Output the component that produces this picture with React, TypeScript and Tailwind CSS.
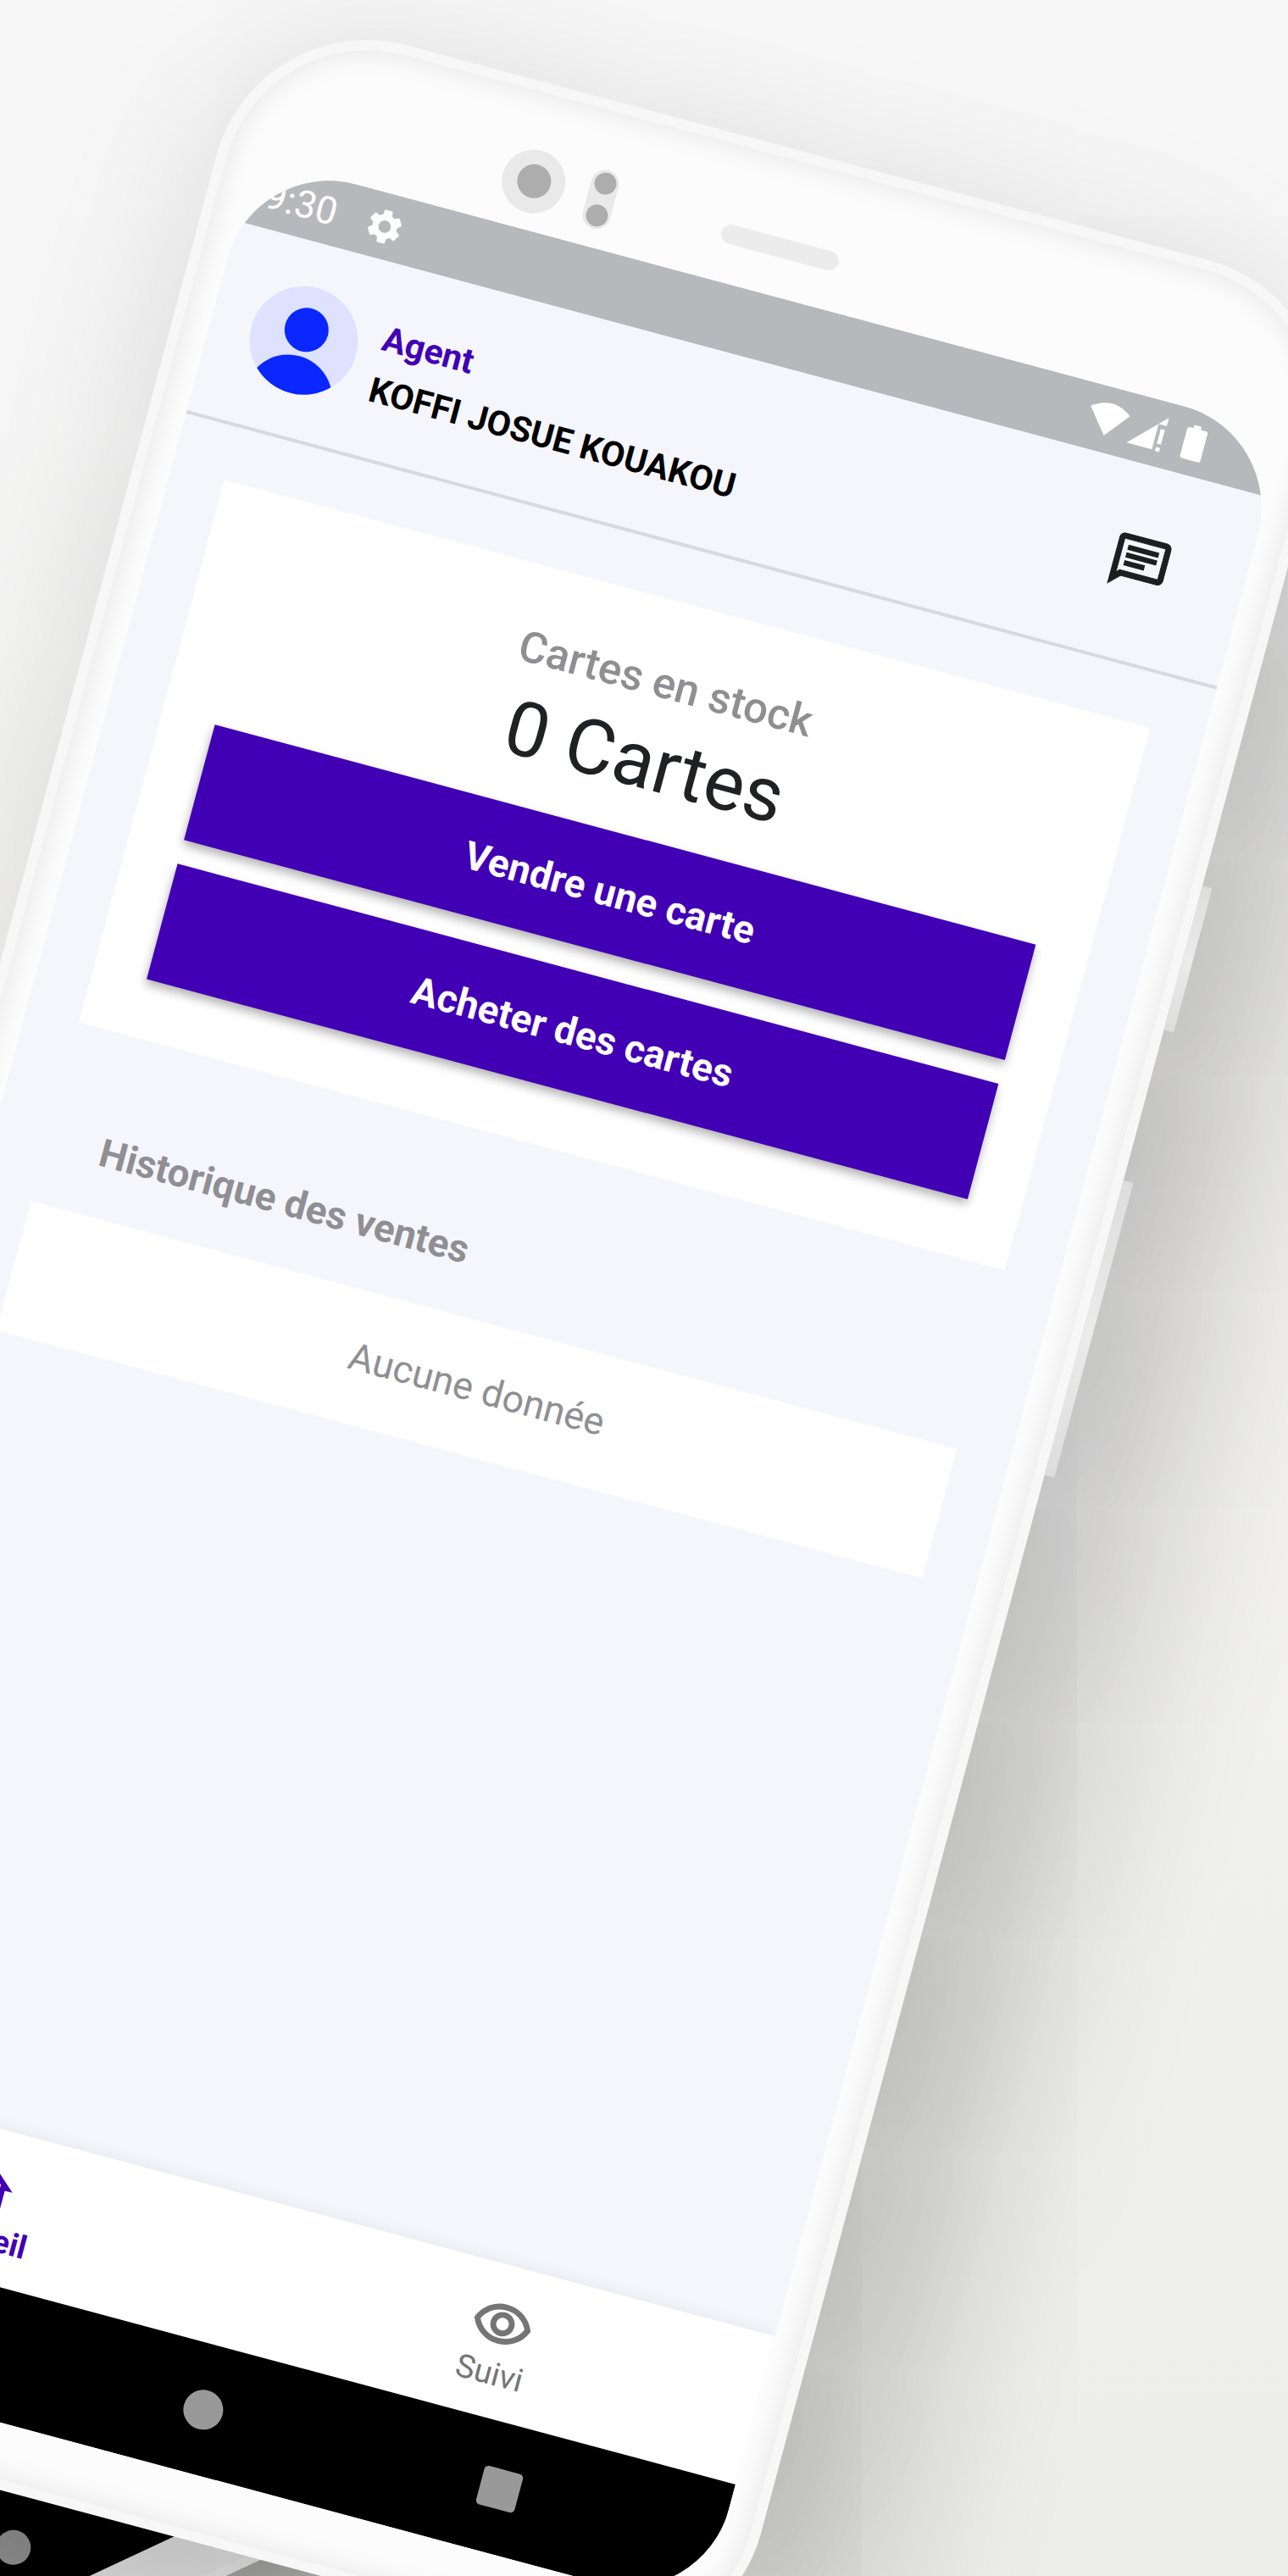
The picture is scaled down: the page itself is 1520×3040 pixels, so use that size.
import { MdOutlineHome, MdSettings } from "react-icons/md";

const actions = ["Vendre une carte", "Acheter des cartes"];

const tabs = [
  { label: "Accueil", icon: MdOutlineHome, active: true },
  { label: "Suivi", icon: EyeIcon, active: false },
];

function EyeIcon({ className }: { className?: string }) {
  return (
    <svg viewBox="0 0 24 24" className={className} fill="none" stroke="currentColor" strokeWidth="2.2" aria-hidden="true">
      <path d="M2.2 12 C4 7.8 7.8 5.5 12 5.5 S20 7.8 21.8 12 C20 16.2 16.2 18.5 12 18.5 S4 16.2 2.2 12 Z" />
      <circle cx="12" cy="12" r="3.5" />
    </svg>
  );
}

function ChatIcon({ className }: { className?: string }) {
  return (
    <svg viewBox="0 0 24 24" className={className} fill="currentColor" stroke="currentColor" strokeWidth="0.3" aria-hidden="true">
      <path d="M4 4h16v12H5.17L4 17.17V4m0-2c-1.1 0-1.99.9-1.99 2L2 22l4-4h14c1.1 0 2-.9 2-2V4c0-1.1-.9-2-2-2H4z" />
      <path d="M6 12h8v2H6z M6 9h12v2H6z M6 6h12v2H6z" stroke="none" />
    </svg>
  );
}

function Avatar() {
  return (
    <svg viewBox="-64 -64 128 128" className="size-32 shrink-0" role="img" aria-label="Agent">
      <defs>
        <clipPath id="avatar-clip">
          <circle r="64" />
        </clipPath>
      </defs>
      <circle r="64" fill="#dfe2ff" />
      <g clipPath="url(#avatar-clip)" fill="#0a27ff">
        <circle cy="-13" r="26" />
        <circle cy="71" r="52" />
      </g>
    </svg>
  );
}

function StatusIcons() {
  return (
    <svg viewBox="0 0 142 42" className="h-[42px] w-[142px] fill-white" aria-hidden="true">
      {/* Wifi */}
      <path d="M0 10 Q24 -8 48 10 L24 40 Z" />
      {/* Signal */}
      <path d="M93 0 V10 H83 V41 H52 Z" />
      <path d="M87 15 h5 v18 h-5 Z M87 37 h5 v5 h-5 Z" />
      {/* Battery */}
      <path d="M124 0 h9 v4 h6 q3 0 3 3 v32 q0 3 -3 3 h-19 q-3 0 -3 -3 v-32 q0 -3 3 -3 h4 Z" />
    </svg>
  );
}

function StatusBar() {
  return (
    <div className="flex h-[78px] items-center bg-[#b7b8bc] pr-[88px] pl-6 text-white">
      <span className="text-[45px] leading-[60px]">9:30</span>
      <MdSettings className="ml-[34px] size-[49px]" />
      <div className="ml-auto">
        <StatusIcons />
      </div>
    </div>
  );
}

function Header() {
  return (
    <header className="flex h-[235px] items-center border-b-4 border-[#d8d9de] pr-[88px] pl-12">
      <Avatar />
      <div className="ml-[26px] pt-2 text-[41px] leading-[62px] font-bold">
        <p className="text-[#4200b5]">Agent</p>
        <h1 className="text-black">KOFFI JOSUE KOUAKOU</h1>
      </div>
      <button type="button" aria-label="Messages" className="ml-auto text-[#1d1e20]">
        <ChatIcon className="size-[75px]" />
      </button>
    </header>
  );
}

function StockCard() {
  return (
    <section className="mt-16 bg-white px-16 pt-[68px] pb-[70px] text-center">
      <h2 className="text-[51px] leading-[60px] font-medium text-[#8f8f93]">Cartes en stock</h2>
      <p className="text-[90px] leading-[132px] text-[#202124]">0 Cartes</p>
      <div className="mt-[22px] flex flex-col gap-[29px]">
        {actions.map((label) => (
          <button
            key={label}
            type="button"
            className="h-[141px] bg-[#4200b5] text-[46px] leading-[60px] font-bold text-white shadow-[0_6px_12px_rgba(0,0,0,0.3)]"
          >
            {label}
          </button>
        ))}
      </div>
    </section>
  );
}

function SalesHistory() {
  return (
    <section className="mt-[111px] leading-[60px] text-[#8f8f93]">
      <h2 className="px-16 text-[46px] font-bold">Historique des ventes</h2>
      <p className="mt-[47px] bg-white py-[49px] text-center text-[45px]">Aucune donnée</p>
    </section>
  );
}

function TabBar() {
  return (
    <nav className="grid grid-cols-2 bg-white pt-8 pb-[30px] shadow-[0_-4px_16px_rgba(0,0,0,0.05)]">
      {tabs.map(({ label, icon: Icon, active }) => (
        <button
          key={label}
          type="button"
          className={`flex flex-col items-center text-[38px] leading-[44px] ${
            active ? "font-bold text-[#4200b5]" : "text-[#757575]"
          }`}
        >
          <Icon className="size-[75px]" />
          {label}
        </button>
      ))}
    </nav>
  );
}

function SystemBar() {
  return (
    <div className="flex h-[154px] items-center justify-center gap-[315px] bg-black">
      <button type="button" aria-label="Retour">
        <svg viewBox="0 0 47 47" className="size-[47px] fill-[#999999]">
          <path d="M40 3 V44 L4 23.5 Z" />
        </svg>
      </button>
      <button type="button" aria-label="Accueil" className="size-[47px] rounded-full bg-[#999999]" />
      <button type="button" aria-label="Applications" className="size-[47px] rounded-[5px] bg-[#999999]" />
    </div>
  );
}

function Bezel() {
  return (
    <div className="flex h-[162px] items-center pt-[46px] pl-72">
      <div className="flex size-[75px] items-center justify-center rounded-full bg-[#e9e9e9]">
        <div className="size-10 rounded-full bg-[#adadad]" />
      </div>
      <div className="ml-7 flex h-[71px] w-[33px] flex-col items-center justify-between rounded-full bg-[#e9e9e9] py-[3px]">
        <div className="size-[26px] rounded-full bg-[#adadad]" />
        <div className="size-[26px] rounded-full bg-[#adadad]" />
      </div>
      <div className="ml-[131px] h-[23px] w-[143px] rounded-full bg-[#ececec]" />
    </div>
  );
}

function BackPhone() {
  return (
    <div className="absolute -bottom-[90px] -left-[519px] flex h-[600px] w-[1185px] origin-bottom -rotate-25 flex-col justify-end rounded-[162px] border-[11px] border-[#f7f7f7] bg-[#f2f2f2] px-7 pb-[57px] shadow-[60px_60px_120px_rgba(0,0,0,0.3)]">
      <div className="flex h-[400px] items-end justify-center overflow-hidden rounded-b-[109px] bg-black pb-12">
        <div className="size-[41px] rounded-full bg-[#999999]" />
      </div>
    </div>
  );
}

function Phone() {
  return (
    <div className="relative mt-1.5 ml-[303px] w-[1347px] shrink-0 origin-top-left rotate-15 rounded-[184px] border-12 border-[#f7f7f7] bg-[#fcfcfc] px-8 pb-[65px] shadow-[0_20px_180px_rgba(0,0,0,0.12),160px_160px_180px_rgba(0,0,0,0.15)]">
      {/* Soft edge inside the rim */}
      <div className="pointer-events-none absolute inset-0 rounded-[172px] shadow-[inset_0_0_32px_rgba(0,0,0,0.1)]" />

      {/* Side buttons */}
      <div className="absolute top-[703px] -right-6 h-[176px] w-3 bg-linear-to-b from-[#dddddd] via-[#ebebeb] to-[#dddddd]" />
      <div className="absolute top-[1063px] -right-6 h-[360px] w-3 bg-linear-to-b from-[#dddddd] via-[#ebebeb] to-[#dddddd]" />

      <Bezel />
      <div className="relative flex min-h-[2660px] flex-col overflow-hidden rounded-[124px] bg-[#f5f6fb]">
        <StatusBar />
        <Header />
        <main className="flex-1 px-16">
          <StockCard />
          <SalesHistory />
        </main>
        <TabBar />
        <SystemBar />
      </div>
    </div>
  );
}

export default function App() {
  return (
    <div className="relative flex min-h-screen w-full items-start overflow-hidden bg-linear-to-b from-[#f8f7f7] to-[#ededeb] font-['Roboto',sans-serif]">
      <BackPhone />
      <Phone />
    </div>
  );
}
